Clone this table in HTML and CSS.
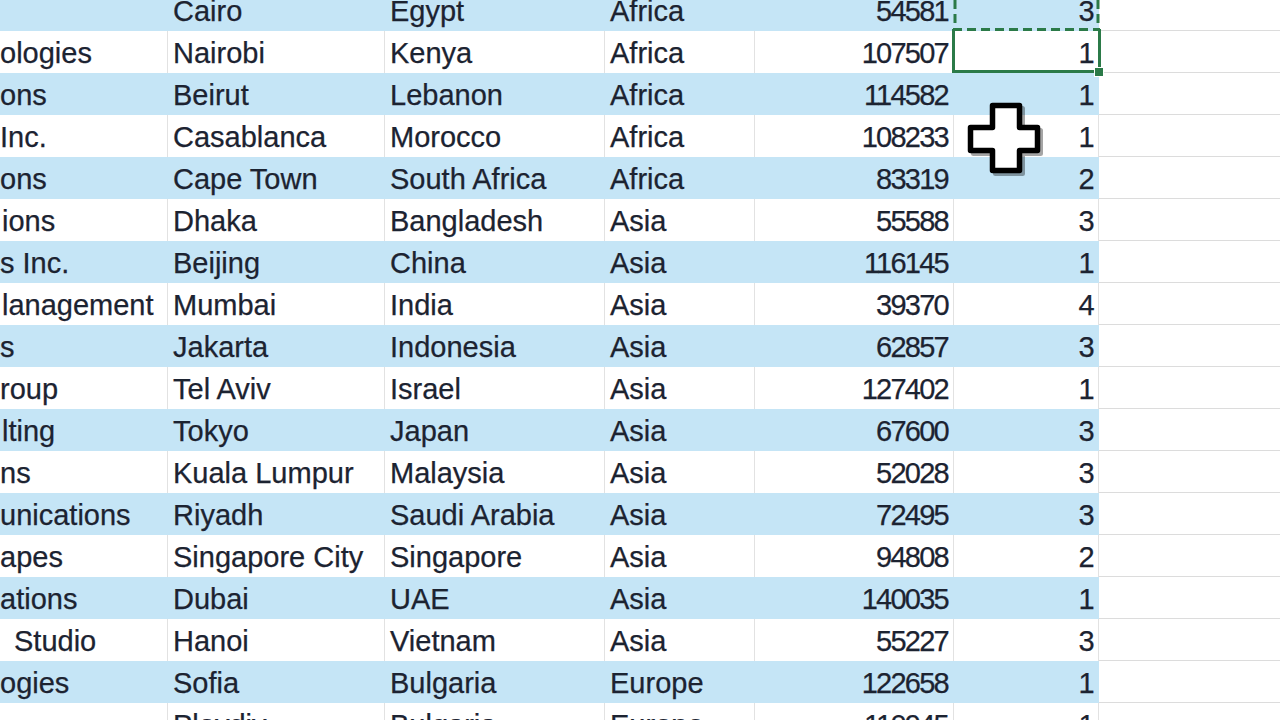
FILE: index.html
```html
<!DOCTYPE html>
<html lang="en">
<head>
<meta charset="utf-8">
<title>Sheet</title>
<link rel="stylesheet" href="styles.css">
</head>
<body>
<div class="sheet">
  <div class="row alt"><div class="c a"></div><div class="c">Cairo</div><div class="c">Egypt</div><div class="c">Africa</div><div class="c n">54581</div><div class="c n">3</div><div class="blank"></div></div>
  <div class="row"><div class="c a">ologies</div><div class="c">Nairobi</div><div class="c">Kenya</div><div class="c">Africa</div><div class="c n">107507</div><div class="c n">1</div><div class="blank"></div></div>
  <div class="row alt"><div class="c a">ons</div><div class="c">Beirut</div><div class="c">Lebanon</div><div class="c">Africa</div><div class="c n">114582</div><div class="c n">1</div><div class="blank"></div></div>
  <div class="row"><div class="c a">Inc.</div><div class="c">Casablanca</div><div class="c">Morocco</div><div class="c">Africa</div><div class="c n">108233</div><div class="c n">1</div><div class="blank"></div></div>
  <div class="row alt"><div class="c a">ons</div><div class="c">Cape Town</div><div class="c">South Africa</div><div class="c">Africa</div><div class="c n">83319</div><div class="c n">2</div><div class="blank"></div></div>
  <div class="row"><div class="c a i2">ions</div><div class="c">Dhaka</div><div class="c">Bangladesh</div><div class="c">Asia</div><div class="c n">55588</div><div class="c n">3</div><div class="blank"></div></div>
  <div class="row alt"><div class="c a">s Inc.</div><div class="c">Beijing</div><div class="c">China</div><div class="c">Asia</div><div class="c n">116145</div><div class="c n">1</div><div class="blank"></div></div>
  <div class="row"><div class="c a i2">lanagement</div><div class="c">Mumbai</div><div class="c">India</div><div class="c">Asia</div><div class="c n">39370</div><div class="c n">4</div><div class="blank"></div></div>
  <div class="row alt"><div class="c a">s</div><div class="c">Jakarta</div><div class="c">Indonesia</div><div class="c">Asia</div><div class="c n">62857</div><div class="c n">3</div><div class="blank"></div></div>
  <div class="row"><div class="c a">roup</div><div class="c">Tel Aviv</div><div class="c">Israel</div><div class="c">Asia</div><div class="c n">127402</div><div class="c n">1</div><div class="blank"></div></div>
  <div class="row alt"><div class="c a i2">lting</div><div class="c">Tokyo</div><div class="c">Japan</div><div class="c">Asia</div><div class="c n">67600</div><div class="c n">3</div><div class="blank"></div></div>
  <div class="row"><div class="c a">ns</div><div class="c">Kuala Lumpur</div><div class="c">Malaysia</div><div class="c">Asia</div><div class="c n">52028</div><div class="c n">3</div><div class="blank"></div></div>
  <div class="row alt"><div class="c a">unications</div><div class="c">Riyadh</div><div class="c">Saudi Arabia</div><div class="c">Asia</div><div class="c n">72495</div><div class="c n">3</div><div class="blank"></div></div>
  <div class="row"><div class="c a">apes</div><div class="c">Singapore City</div><div class="c">Singapore</div><div class="c">Asia</div><div class="c n">94808</div><div class="c n">2</div><div class="blank"></div></div>
  <div class="row alt"><div class="c a">ations</div><div class="c">Dubai</div><div class="c">UAE</div><div class="c">Asia</div><div class="c n">140035</div><div class="c n">1</div><div class="blank"></div></div>
  <div class="row"><div class="c a i14">Studio</div><div class="c">Hanoi</div><div class="c">Vietnam</div><div class="c">Asia</div><div class="c n">55227</div><div class="c n">3</div><div class="blank"></div></div>
  <div class="row alt"><div class="c a">ogies</div><div class="c">Sofia</div><div class="c">Bulgaria</div><div class="c">Europe</div><div class="c n">122658</div><div class="c n">1</div><div class="blank"></div></div>
  <div class="row"><div class="c a"></div><div class="c">Plovdiv</div><div class="c">Bulgaria</div><div class="c">Europe</div><div class="c n">110945</div><div class="c n">1</div><div class="blank"></div></div>

  <svg class="selection" width="170" height="90" viewBox="0 0 170 90" aria-hidden="true">
    <g stroke="#2b7a48" stroke-width="3" fill="none">
      <line x1="15" y1="0" x2="15" y2="27" stroke-dasharray="9 5"/>
      <line x1="158" y1="0" x2="158" y2="27" stroke-dasharray="9 5"/>
      <line x1="13" y1="29.5" x2="160" y2="29.5" stroke-dasharray="9 5"/>
      <polyline points="13.5,29 13.5,71.5 159.5,71.5 159.5,29"/>
    </g>
    <rect x="154" y="67" width="10" height="10" fill="#fff"/>
    <rect x="155" y="68" width="8" height="8" fill="#2b7a48"/>
  </svg>

  <svg class="cursor" width="84" height="82" viewBox="0 0 84 82" aria-hidden="true">
    <polygon transform="translate(3,3)" points="26.5,4.5 53.5,4.5 53.5,26.5 71.5,26.5 71.5,49.5 53.5,49.5 53.5,69.5 26.5,69.5 26.5,49.5 4.5,49.5 4.5,26.5 26.5,26.5" fill="#000" stroke="#000" stroke-width="5" opacity="0.35" stroke-linejoin="round"/>
    <polygon points="26.5,4.5 53.5,4.5 53.5,26.5 71.5,26.5 71.5,49.5 53.5,49.5 53.5,69.5 26.5,69.5 26.5,49.5 4.5,49.5 4.5,26.5 26.5,26.5" fill="#fff" stroke="#000" stroke-width="5.5" stroke-linejoin="round"/>
  </svg>
</div>
</body>
</html>
```

FILE: styles.css
```css
html, body {
  margin: 0;
  padding: 0;
}

body {
  width: 1280px;
  height: 720px;
  overflow: hidden;
  background: #ffffff;
  font-family: "Liberation Sans", Arial, sans-serif;
  font-size: 29px;
  color: #1c2331;
  -webkit-text-stroke: 0.25px #1c2331;
}

.sheet {
  position: relative;
  margin-top: -11px;
}

.row {
  display: grid;
  grid-template-columns: 168px 217px 220px 150px 199px 145px 1fr;
  height: 42px;
}

.c {
  box-sizing: border-box;
  height: 42px;
  line-height: 44px;
  padding: 0 5px;
  white-space: nowrap;
  overflow: hidden;
  border-right: 1px solid #e2e2e2;
  background: #ffffff;
}

.row.alt .c {
  background: #c5e5f6;
  border-right-color: #c5e5f6;
}

.c.a {
  padding-left: 0;
}

.c.i2 {
  padding-left: 2px;
}

.c.i14 {
  padding-left: 14px;
}

.c.n {
  text-align: right;
  padding-right: 5px;
  letter-spacing: -1.75px;
}

.blank {
  box-sizing: border-box;
  height: 42px;
  border-bottom: 1px solid #dcdcdc;
}

.selection {
  position: absolute;
  left: 940px;
  top: 11px;
}

.cursor {
  position: absolute;
  left: 966px;
  top: 112px;
}
```
